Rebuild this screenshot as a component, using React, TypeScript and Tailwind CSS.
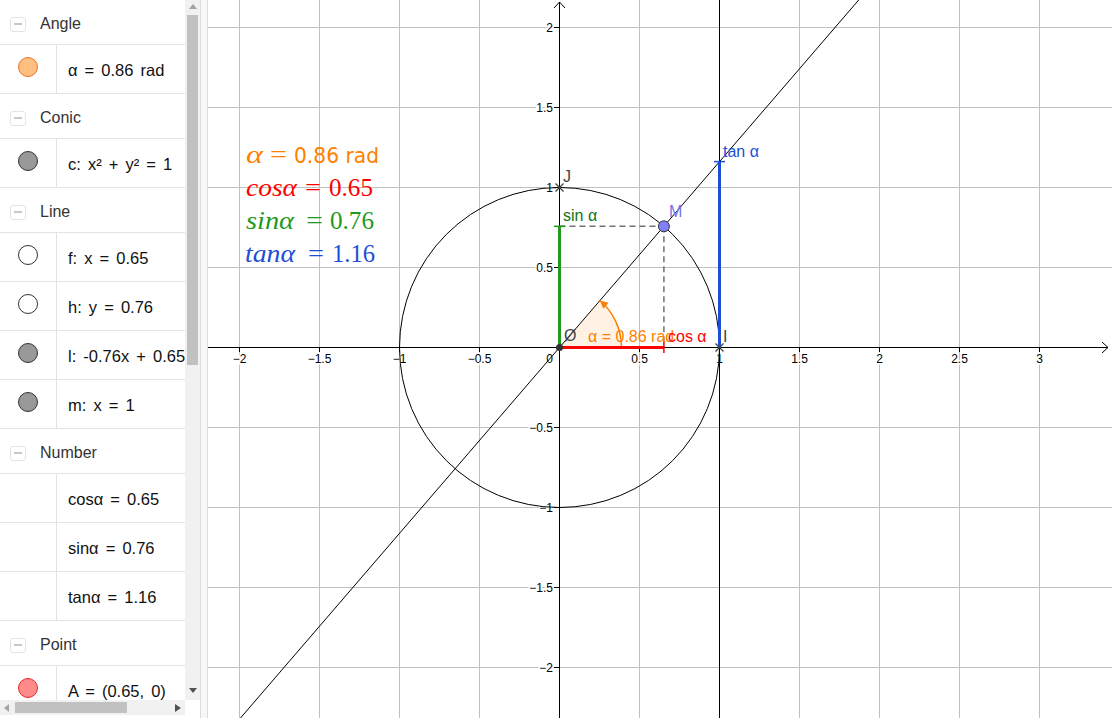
import React from 'react';

type Dot = 'orange' | 'gray' | 'white' | 'pink' | 'none';

interface Row {
  kind: 'header' | 'item';
  text: string;
  dot?: Dot;
}

const rows: Row[] = [
  { kind: 'header', text: 'Angle' },
  { kind: 'item', dot: 'orange', text: 'α = 0.86 rad' },
  { kind: 'header', text: 'Conic' },
  { kind: 'item', dot: 'gray', text: 'c: x² + y² = 1' },
  { kind: 'header', text: 'Line' },
  { kind: 'item', dot: 'white', text: 'f: x = 0.65' },
  { kind: 'item', dot: 'white', text: 'h: y = 0.76' },
  { kind: 'item', dot: 'gray', text: 'l: -0.76x + 0.65' },
  { kind: 'item', dot: 'gray', text: 'm: x = 1' },
  { kind: 'header', text: 'Number' },
  { kind: 'item', dot: 'none', text: 'cosα = 0.65' },
  { kind: 'item', dot: 'none', text: 'sinα = 0.76' },
  { kind: 'item', dot: 'none', text: 'tanα = 1.16' },
  { kind: 'header', text: 'Point' },
  { kind: 'item', dot: 'pink', text: 'A = (0.65, 0)' },
];

const dotClass: Record<Dot, string> = {
  orange: 'bg-[#ffbf80] border-[#e8732a]',
  gray: 'bg-[#999999] border-[#333333]',
  white: 'bg-white border-[#333333]',
  pink: 'bg-[#ff8a8a] border-[#e8262a]',
  none: 'hidden',
};

const font = { fontFamily: '"Liberation Sans", Arial, sans-serif' };

const AlgebraRow: React.FC<{ row: Row }> = ({ row }) => {
  if (row.kind === 'header') {
    return (
      <div className="h-[45px] shrink-0 flex items-center pt-[4px] border-b border-[#e3e3e3]">
        <div className="ml-[10px] w-[16px] h-[15px] rounded-[3px] border border-[#e4e4e4] flex items-center justify-center">
          <div className="w-[8px] h-[2px] bg-[#c8c8c8]" />
        </div>
        <span className="ml-[14px] text-[16px] text-[#333]">{row.text}</span>
      </div>
    );
  }
  return (
    <div className="h-[49px] shrink-0 flex border-b border-[#e3e3e3]">
      <div className="w-[57px] shrink-0 border-r border-[#e3e3e3] flex items-start justify-center pt-[12px]">
        <div className={`w-[20px] h-[20px] rounded-full border ${dotClass[row.dot ?? 'none']}`} />
      </div>
      <div className="pl-[11px] pt-[3px] flex items-center whitespace-nowrap text-[16.5px] text-[#111] [word-spacing:2.5px]">
        {row.text}
      </div>
    </div>
  );
};

const gx = [239, 319, 399, 479, 639, 719, 799, 879, 959, 1039];
const gy = [27, 107, 187, 267, 427, 507, 587, 667];
const xLabels: [number, string][] = [
  [239, '−2'], [319, '−1.5'], [399, '−1'], [479, '−0.5'], [639, '0.5'],
  [719, '1'], [799, '1.5'], [879, '2'], [959, '2.5'], [1039, '3'],
];
const yLabels: [number, string][] = [
  [27, '2'], [107, '1.5'], [187, '1'], [267, '0.5'],
  [427, '−0.5'], [507, '−1'], [587, '−1.5'], [667, '−2'],
];

const serif = '"Liberation Serif", "DejaVu Serif", serif';

// pieces of the big formula block: text, x, width, baseline, colour, italic
const formula: [string, number, number, number, string, boolean][] = [
  ['α', 246, 17, 163, '#ff7f00', true],
  ['=', 270, 17, 163, '#ff7f00', false],
  ['cosα', 246, 51, 196, '#ff0000', true],
  ['=', 305, 16, 196, '#ff0000', false],
  ['0.65', 329, 44, 196, '#ff0000', false],
  ['sinα', 246, 48, 229, '#1e9a1e', true],
  ['=', 306, 17, 229, '#1e9a1e', false],
  ['0.76', 330, 44, 229, '#1e9a1e', false],
  ['tanα', 245, 50, 262, '#1d4ed8', true],
  ['=', 308, 16, 262, '#1d4ed8', false],
  ['1.16', 332, 43, 262, '#1d4ed8', false],
];

const Graphics: React.FC = () => {
  const ox = 559.5;
  const oy = 347.5;
  const mx = 663.9;
  const my = 226.3;
  const halo = { paintOrder: 'stroke' as const, stroke: '#fff', strokeWidth: 3 };
  return (
    <svg width={904} height={718} viewBox="208 0 904 718" className="block shrink-0" style={font}>
      {gx.map((x) => (
        <line key={'gx' + x} x1={x + 0.5} y1={0} x2={x + 0.5} y2={718} stroke="#c0c0c0" strokeWidth={1} />
      ))}
      {gy.map((y) => (
        <line key={'gy' + y} x1={208} y1={y + 0.5} x2={1112} y2={y + 0.5} stroke="#c0c0c0" strokeWidth={1} />
      ))}

      {/* formula block */}
      <g fontSize={25} fontFamily={serif}>
        {formula.map(([t, x, w, y, c, it], i) => (
          <text key={i} x={x} y={y} fill={c} fontStyle={it ? 'italic' : 'normal'} textLength={w} lengthAdjust="spacingAndGlyphs">
            {t}
          </text>
        ))}
        <text x={294} y={163} fill="#ff7f00" fontFamily='"DejaVu Sans", sans-serif' fontSize={22} textLength={85} lengthAdjust="spacingAndGlyphs">
          0.86 rad
        </text>
      </g>

      {/* axes */}
      <line x1={208} y1={oy} x2={1108} y2={oy} stroke="#000" strokeWidth={1} />
      <polyline points="1102,342 1108,347.5 1102,353" fill="none" stroke="#000" strokeWidth={1} />
      <line x1={ox} y1={2} x2={ox} y2={718} stroke="#000" strokeWidth={1} />
      <polyline points="554,8 559.5,2 565,8" fill="none" stroke="#000" strokeWidth={1} />
      {xLabels.map(([x]) => (
        <line key={'tx' + x} x1={x + 0.5} y1={347} x2={x + 0.5} y2={352} stroke="#000" strokeWidth={1} />
      ))}
      {yLabels.map(([y]) => (
        <line key={'ty' + y} x1={554} y1={y + 0.5} x2={559} y2={y + 0.5} stroke="#000" strokeWidth={1} />
      ))}
      <g fontSize={12} fill="#000">
        {xLabels.map(([x, t]) => (
          <text key={'lx' + x} x={x + 0.5} y={363} textAnchor="middle" style={halo}>{t}</text>
        ))}
        {yLabels.map(([y, t]) => (
          <text key={'ly' + y} x={553} y={y + 5} textAnchor="end" style={halo}>{t}</text>
        ))}
        <text x={553} y={363} textAnchor="end" style={halo}>0</text>
      </g>

      {/* unit circle and lines */}
      <circle cx={ox} cy={oy} r={160} fill="none" stroke="#000" strokeWidth={1} />
      <line x1={240.5} y1={718} x2={858.7} y2={0} stroke="#000" strokeWidth={1} />
      <line x1={719.5} y1={0} x2={719.5} y2={718} stroke="#000" strokeWidth={1} />

      {/* angle */}
      <path d="M559.5 347.5 L621.5 347.5 A62 62 0 0 0 599.9 300.5 Z" fill="#ff7f00" fillOpacity={0.1} />
      <path d="M621.5 347.5 A62 62 0 0 0 599.9 300.5" fill="none" stroke="#ff7f00" strokeWidth={1.5} />
      <polygon points="599.9,300.5 608.6,302.7 603.4,308.7" fill="#ff7f00" />

      {/* dashed projections */}
      <line x1={ox} y1={my} x2={mx} y2={my} stroke="#707070" strokeWidth={1.5} strokeDasharray="6 4" />
      <line x1={mx} y1={my} x2={mx} y2={oy} stroke="#707070" strokeWidth={1.5} strokeDasharray="6 4" />

      {/* segments */}
      <line x1={ox} y1={oy} x2={mx} y2={oy} stroke="#ff0000" strokeWidth={3} />
      <line x1={mx} y1={342} x2={mx} y2={353} stroke="#ff0000" strokeWidth={1.5} />
      <line x1={ox} y1={oy} x2={ox} y2={my} stroke="#1e9a1e" strokeWidth={3} />
      <line x1={554} y1={my} x2={565} y2={my} stroke="#1e9a1e" strokeWidth={1.5} />
      <line x1={719.5} y1={oy} x2={719.5} y2={161.6} stroke="#1d4ed8" strokeWidth={3} />
      <line x1={714} y1={161.6} x2={725} y2={161.6} stroke="#1d4ed8" strokeWidth={1.5} />

      {/* points */}
      <g stroke="#444" strokeWidth={1.2}>
        <line x1={555.5} y1={183.5} x2={563.5} y2={191.5} />
        <line x1={563.5} y1={183.5} x2={555.5} y2={191.5} />
        <line x1={715.5} y1={343.5} x2={723.5} y2={351.5} />
        <line x1={723.5} y1={343.5} x2={715.5} y2={351.5} />
      </g>
      <circle cx={ox} cy={oy} r={3.5} fill="#333" />
      <circle cx={mx} cy={my} r={5.5} fill="#8080ff" stroke="#333" strokeWidth={1} />

      {/* labels */}
      <g fontSize={16}>
        <text x={588} y={342} fill="#ff7f00">α = 0.86 rad</text>
        <text x={668} y={342} fill="#ff0000">cos α</text>
        <text x={563} y={221} fill="#137313">sin α</text>
        <text x={723} y={157} fill="#1d4ed8">tan α</text>
        <text x={669} y={217} fill="#7373e6">M</text>
        <text x={563} y={182} fill="#444">J</text>
        <text x={723} y={342} fill="#444">I</text>
        <text x={564} y={341} fill="#444">Ø</text>
      </g>
    </svg>
  );
};

export default function App() {
  return (
    <div className="flex w-[1112px] h-[718px] overflow-hidden bg-white" style={font}>
      <div className="w-[185px] shrink-0 flex flex-col">
        <div className="flex-1 min-h-0 overflow-hidden flex flex-col">
          {rows.map((r, i) => (
            <AlgebraRow key={i} row={r} />
          ))}
        </div>
        <div className="h-[18px] shrink-0 pb-[3px]">
          <div className="h-[15px] bg-[#f1f1f1] flex items-center">
            <svg width={6} height={8} className="ml-[4px]"><polygon points="5,0 0,4 5,8" fill="#a3a3a3" /></svg>
            <div className="ml-[5px] w-[112px] h-[11px] bg-[#c1c1c1]" />
            <div className="flex-1" />
            <svg width={6} height={8} className="mr-[4px]"><polygon points="0,0 6,4 0,8" fill="#505050" /></svg>
          </div>
        </div>
      </div>
      <div className="w-[15px] shrink-0 flex flex-col">
        <div className="h-[700px] bg-[#f1f1f1] flex flex-col items-center">
          <svg width={8} height={6} className="mt-[4px]"><polygon points="0,5 4,0 8,5" fill="#a3a3a3" /></svg>
          <div className="mt-[5px] w-[11px] h-[350px] bg-[#c1c1c1]" />
          <div className="flex-1" />
          <svg width={8} height={6} className="mb-[6px]"><polygon points="0,0 8,0 4,5" fill="#505050" /></svg>
        </div>
      </div>
      <div className="w-[8px] shrink-0 border-l border-r border-[#dcdcdc] bg-[#f7f7f7]" />
      <Graphics />
    </div>
  );
}
